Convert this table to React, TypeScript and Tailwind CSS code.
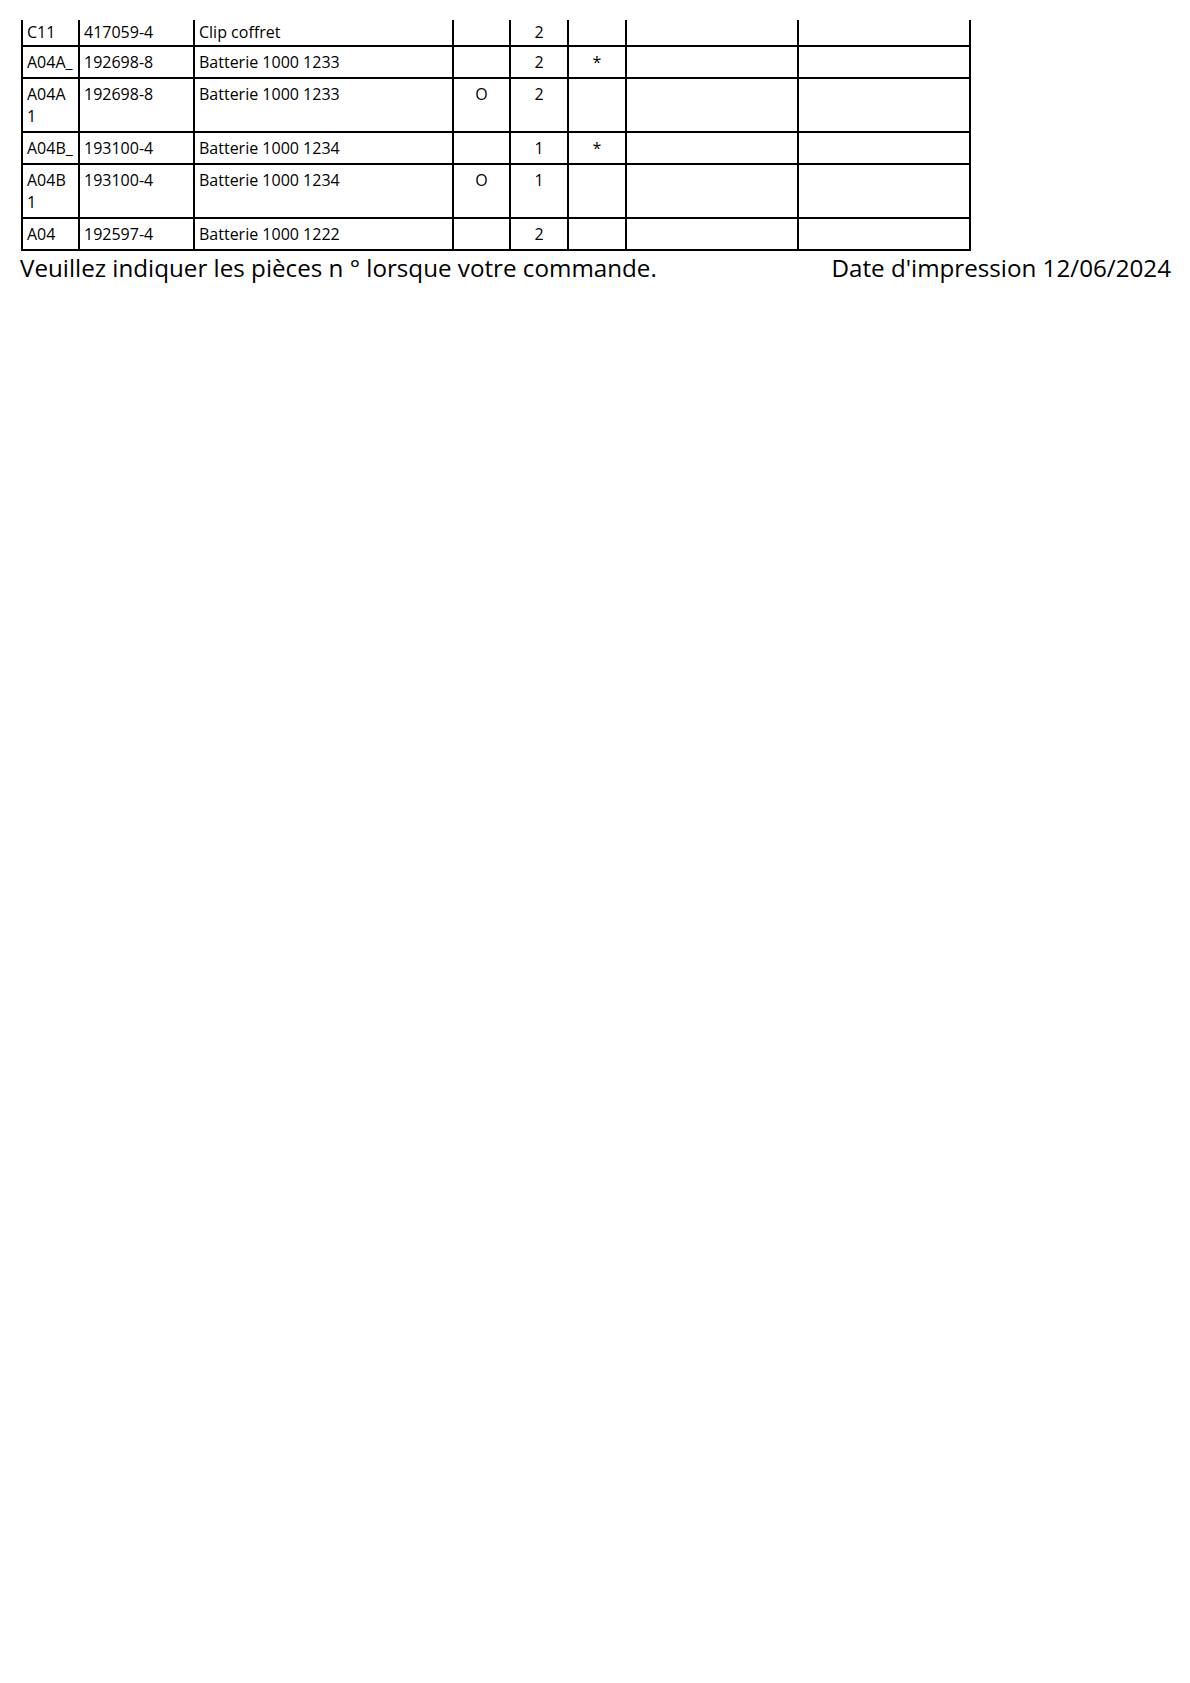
const rows = [
  { ref: ['C11'], code: '417059-4', name: 'Clip coffret', o: '', qty: '2', star: '', first: true },
  { ref: ['A04A_'], code: '192698-8', name: 'Batterie 1000 1233', o: '', qty: '2', star: '*' },
  { ref: ['A04A', '1'], code: '192698-8', name: 'Batterie 1000 1233', o: 'O', qty: '2', star: '' },
  { ref: ['A04B_'], code: '193100-4', name: 'Batterie 1000 1234', o: '', qty: '1', star: '*' },
  { ref: ['A04B', '1'], code: '193100-4', name: 'Batterie 1000 1234', o: 'O', qty: '1', star: '' },
  { ref: ['A04'], code: '192597-4', name: 'Batterie 1000 1222', o: '', qty: '2', star: '' },
];

export default function App() {
  return (
    <div className="min-h-[1683px] w-[1190px] bg-white text-black pt-[20px] font-['Open_Sans',_'Noto_Sans',sans-serif]">
      <div className="pl-[21px]">
        <table className="table-fixed border-collapse w-[948px] text-[16px] leading-[22px]">
          <colgroup>
            <col className="w-[57px]" />
            <col className="w-[115px]" />
            <col className="w-[259px]" />
            <col className="w-[57px]" />
            <col className="w-[58px]" />
            <col className="w-[58px]" />
            <col className="w-[172px]" />
            <col className="w-[172px]" />
          </colgroup>
          <tbody>
            {rows.map((r, i) => {
              const cell = r.first
                ? 'border-2 border-t-0 border-black align-top px-[4px] pt-[1px] pb-[2px] whitespace-nowrap'
                : 'border-2 border-black align-top px-[4px] pt-[4px] pb-[4px] whitespace-nowrap';
              return (
                <tr key={i}>
                  <td className={cell}>
                    {r.ref.map((t, j) => (
                      <div key={j}>{t}</div>
                    ))}
                  </td>
                  <td className={cell}>{r.code}</td>
                  <td className={cell}>{r.name}</td>
                  <td className={cell + ' text-center'}>{r.o}</td>
                  <td className={cell + ' text-center'}>{r.qty}</td>
                  <td className={cell + ' text-center'}>{r.star}</td>
                  <td className={cell}></td>
                  <td className={cell}></td>
                </tr>
              );
            })}
          </tbody>
        </table>
      </div>
      <div className="flex justify-between pl-[20px] pr-[19px] text-[24.2px] leading-[34px]">
        <span>Veuillez indiquer les pièces n ° lorsque votre commande.</span>
        <span>Date d'impression 12/06/2024</span>
      </div>
    </div>
  );
}
